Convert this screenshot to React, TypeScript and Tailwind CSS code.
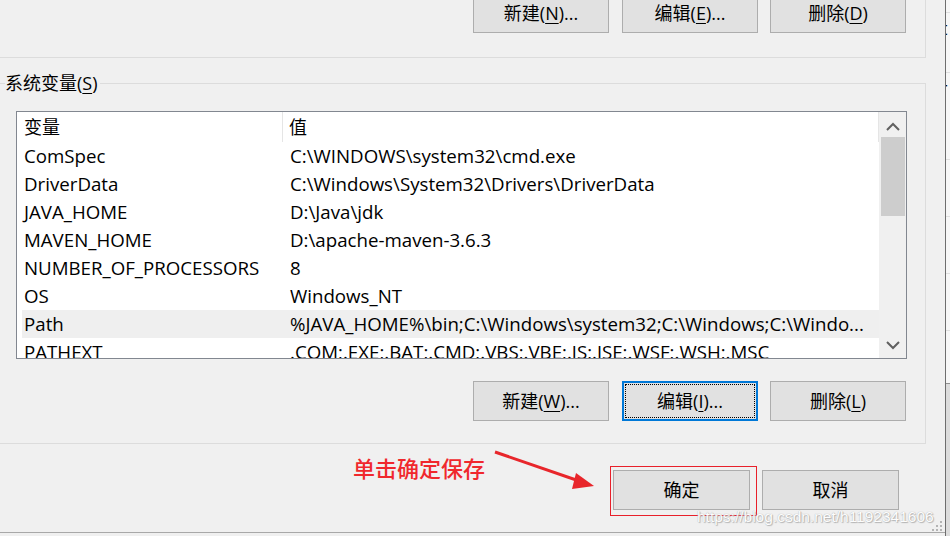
import React from "react";

const FONT = { fontFamily: "'Open Sans','Noto Sans CJK SC',sans-serif" };

function Btn({
  children,
  w = "w-[136px]",
  focused = false,
  className = "",
}: {
  children: React.ReactNode;
  w?: string;
  focused?: boolean;
  className?: string;
}) {
  return (
    <div
      className={`${w} h-[40px] flex items-center justify-center bg-[#e1e1e1] text-[18px] text-black ${
        focused ? "border-2 border-[#0078d7] p-[1px]" : "border border-[#adadad]"
      } ${className}`}
    >
      {focused ? (
        <div className="w-full h-full flex items-center justify-center border border-dotted border-black">
          {children}
        </div>
      ) : (
        children
      )}
    </div>
  );
}

const rows: [string, string][] = [
  ["ComSpec", "C:\\WINDOWS\\system32\\cmd.exe"],
  ["DriverData", "C:\\Windows\\System32\\Drivers\\DriverData"],
  ["JAVA_HOME", "D:\\Java\\jdk"],
  ["MAVEN_HOME", "D:\\apache-maven-3.6.3"],
  ["NUMBER_OF_PROCESSORS", "8"],
  ["OS", "Windows_NT"],
  ["Path", "%JAVA_HOME%\\bin;C:\\Windows\\system32;C:\\Windows;C:\\Windo..."],
  ["PATHEXT", ".COM;.EXE;.BAT;.CMD;.VBS;.VBE;.JS;.JSE;.WSF;.WSH;.MSC"],
];

function U({ children }: { children: React.ReactNode }) {
  return <span className="underline underline-offset-[3px] decoration-1">{children}</span>;
}

export default function App() {
  return (
    <div className="w-[950px] h-[536px] bg-[#f0f0f0] overflow-hidden flex relative" style={FONT}>
      {/* main window */}
      <div className="w-[945px] h-full flex flex-col relative">
        {/* top group (cut off) */}
        <div className="w-[926px] h-[58px] border-r border-b border-[#dcdcdc] flex justify-end pr-[19px]">
          <div className="flex mt-[-7px] h-[40px]">
            <Btn>
              新建(<U>N</U>)...
            </Btn>
            <Btn className="ml-[13px]">
              编辑(<U>E</U>)...
            </Btn>
            <Btn className="ml-[12px]">
              删除(<U>D</U>)
            </Btn>
          </div>
        </div>

        {/* system variables group */}
        <div className="mt-[25px] w-[926px] border-t border-r border-b border-[#dcdcdc] relative pt-[27px] pb-[22px]">
          <div className="absolute left-[5px] top-[-13px] bg-[#f0f0f0] pr-[2px] text-[18px] leading-[24px] text-black">
            系统变量(<U>S</U>)
          </div>

          {/* list box */}
          <div className="ml-[16px] w-[891px] h-[248px] border border-[#828790] bg-white flex overflow-hidden">
            <div className="w-[862px] h-full flex flex-col overflow-hidden">
              {/* header */}
              <div className="h-[30px] flex shrink-0 text-[18px] text-black">
                <div className="w-[266px] h-full flex items-center pl-[7px] border-r border-[#e5e5e5]">
                  变量
                </div>
                <div className="flex-1 h-full flex items-center pl-[6px] border-r border-[#e5e5e5]">
                  值
                </div>
              </div>
              {rows.map(([k, v]) => (
                <div
                  key={k}
                  className={`h-[28px] shrink-0 ml-[5px] flex items-center text-[18.7px] text-black whitespace-nowrap ${
                    k === "Path" ? "bg-[#efefef]" : ""
                  }`}
                >
                  <div className="w-[262px] shrink-0 pl-[2px]">{k}</div>
                  <div className="pl-[6px]">{v}</div>
                </div>
              ))}
            </div>
            {/* scrollbar */}
            <div className="w-[27px] h-full bg-[#f0f0f0] flex flex-col items-center">
              <div className="h-[25px] w-full flex items-center justify-center pt-[4px]">
                <svg width="16" height="10" viewBox="0 0 16 10">
                  <path d="M2 8 L8 2 L14 8" fill="none" stroke="#606060" strokeWidth="2" />
                </svg>
              </div>
              <div className="w-[24px] h-[79px] bg-[#cdcdcd]" />
              <div className="flex-1" />
              <div className="h-[25px] w-full flex items-center justify-center pb-[2px]">
                <svg width="16" height="10" viewBox="0 0 16 10">
                  <path d="M2 2 L8 8 L14 2" fill="none" stroke="#606060" strokeWidth="2" />
                </svg>
              </div>
            </div>
          </div>

          {/* buttons */}
          <div className="flex justify-end pr-[19px] mt-[22px]">
            <Btn>
              新建(<U>W</U>)...
            </Btn>
            <Btn className="ml-[13px]" focused>
              编辑(<U>I</U>)...
            </Btn>
            <Btn className="ml-[12px]">
              删除(<U>L</U>)
            </Btn>
          </div>
        </div>

        {/* OK / Cancel */}
        <div className="flex justify-end pr-[46px] mt-[26px]">
          <div className="relative">
            <div className="absolute left-[-3px] top-[-4px] w-[147px] h-[50px] border border-[#e8202a]" />
            <Btn w="w-[137px]">确定</Btn>
          </div>
          <Btn w="w-[137px]" className="ml-[12px]">
            取消
          </Btn>
        </div>

        <div className="flex-1" />
        <div className="h-[4px] border-t border-[#a8a8a8]" />

        {/* annotation */}
        <div
          className="absolute left-[353px] top-[453px] text-[22px] leading-[28px] text-[#f0282d] font-medium"
          style={{ fontFamily: "'Noto Sans CJK SC',sans-serif" }}
        >
          单击确定保存
        </div>
        <svg className="absolute left-[490px] top-[446px]" width="110" height="46" viewBox="0 0 110 46">
          <line x1="5" y1="6" x2="92" y2="36" stroke="#e8262b" strokeWidth="3" />
          <polygon points="104,40 86,27 82,43" fill="#e8262b" />
        </svg>

        {/* watermark */}
        <div
          className="absolute left-[697px] top-[506px] text-[15.5px] leading-[22px] text-white whitespace-nowrap"
          style={{
            fontFamily: "'Liberation Sans',Arial,sans-serif",
            textShadow: "0 0 1px #9a9a9a, 1px 1px 1px #b0b0b0",
            opacity: 0.9,
          }}
        >
          https://blog.csdn.net/h1192341606
        </div>

        {/* resize grip */}
        <svg className="absolute left-[932px] top-[521px]" width="11" height="11" viewBox="0 0 11 11">
          <rect x="8" y="0" width="2" height="2" fill="#b4b4b4" />
          <rect x="4" y="4" width="2" height="2" fill="#b4b4b4" />
          <rect x="8" y="4" width="2" height="2" fill="#b4b4b4" />
          <rect x="0" y="8" width="2" height="2" fill="#b4b4b4" />
          <rect x="4" y="8" width="2" height="2" fill="#b4b4b4" />
          <rect x="8" y="8" width="2" height="2" fill="#b4b4b4" />
        </svg>
      </div>

      {/* window edge */}
      <div className="w-[1px] h-full bg-[#6e6e6e]" />

      {/* background window strip */}
      <div className="w-[4px] h-full flex flex-col overflow-hidden bg-[#f7f7f7]">
        <div className="h-[13px] border-b border-[#e0e0e0]" />
        <div className="h-[30px] text-[18px] leading-[30px] text-black overflow-hidden ml-[-5px]">t</div>
        <div className="h-[30px] border-b border-[#e0e0e0]" />
        <div className="h-[30px] text-[18px] leading-[30px] text-black overflow-hidden ml-[-6px]">r</div>
        <div className="h-[57px] border-b border-[#e0e0e0]" />
        <div className="h-[57px] border-b border-[#e0e0e0]" />
        <div className="h-[57px] border-b border-[#e0e0e0]" />
        <div className="h-[57px] border-b border-[#e0e0e0]" />
        <div className="h-[53px] border-b border-[#909090]" />
        <div className="flex-1 bg-[#dcdcdc]" />
      </div>
    </div>
  );
}
